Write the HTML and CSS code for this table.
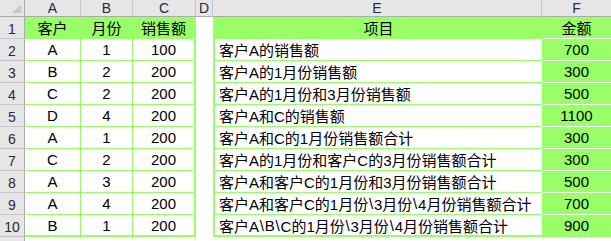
FILE: index.html
```html
<!DOCTYPE html>
<html>
<head>
<meta charset="utf-8">
<link rel="stylesheet" href="styles.css">
</head>
<body>
<div class="sheet">
  <div class="ch corner"><span class="tri"></span></div>
  <div class="ch">A</div><div class="ch">B</div><div class="ch">C</div><div class="ch">D</div><div class="ch">E</div><div class="ch last">F</div>

  <div class="rh">1</div>
  <div class="c fill">客户</div><div class="c fill">月份</div><div class="c fill cr">销售额</div><div class="d"></div>
  <div class="e fill center">项目</div><div class="f">金额</div>

  <div class="rh">2</div>
  <div class="c">A</div><div class="c">1</div><div class="c cr">100</div><div class="d"></div>
  <div class="e">客户A的销售额</div><div class="f">700</div>

  <div class="rh">3</div>
  <div class="c">B</div><div class="c">2</div><div class="c cr">200</div><div class="d"></div>
  <div class="e">客户A的1月份销售额</div><div class="f">300</div>

  <div class="rh">4</div>
  <div class="c">C</div><div class="c">2</div><div class="c cr">200</div><div class="d"></div>
  <div class="e">客户A的1月份和3月份销售额</div><div class="f">500</div>

  <div class="rh">5</div>
  <div class="c">D</div><div class="c">4</div><div class="c cr">200</div><div class="d"></div>
  <div class="e">客户A和C的销售额</div><div class="f">1100</div>

  <div class="rh">6</div>
  <div class="c">A</div><div class="c">1</div><div class="c cr">200</div><div class="d"></div>
  <div class="e">客户A和C的1月份销售额合计</div><div class="f">300</div>

  <div class="rh">7</div>
  <div class="c">C</div><div class="c">2</div><div class="c cr">200</div><div class="d"></div>
  <div class="e">客户A的1月份和客户C的3月份销售额合计</div><div class="f">300</div>

  <div class="rh">8</div>
  <div class="c">A</div><div class="c">3</div><div class="c cr">200</div><div class="d"></div>
  <div class="e">客户A和客户C的1月份和3月份销售额合计</div><div class="f">500</div>

  <div class="rh">9</div>
  <div class="c">A</div><div class="c">4</div><div class="c cr">200</div><div class="d"></div>
  <div class="e">客户A和客户C的1月份<span class="bs">\</span>3月份<span class="bs">\</span>4月份销售额合计</div><div class="f">700</div>

  <div class="rh">10</div>
  <div class="c lastrow">B</div><div class="c lastrow">1</div><div class="c cr lastrow">200</div><div class="d"></div>
  <div class="e lastrow">客户A<span class="bs">\</span>B<span class="bs">\</span>C的1月份<span class="bs">\</span>3月份<span class="bs">\</span>4月份销售额合计</div><div class="f lastrow">900</div>

  <div class="rh"></div>
  <div class="blank"></div><div class="blank"></div><div class="blank"></div><div class="blank"></div><div class="blank"></div><div class="blank"></div>
</div>
</body>
</html>
```

FILE: styles.css
```css
html, body {
  margin: 0;
  padding: 0;
  background: #ffffff;
  overflow: hidden;
}

.sheet {
  display: grid;
  grid-template-columns: 25px 56px 52px 63px 17px 329px 69px;
  grid-template-rows: 17px repeat(11, 22px);
  width: 611px;
  font-family: "Liberation Sans", "Noto Sans CJK SC", sans-serif;
  font-size: 15px;
  color: #000;
}

.sheet > div {
  box-sizing: border-box;
  display: flex;
  align-items: center;
  white-space: nowrap;
  overflow: hidden;
}

.ch {
  background: #e6e6e6;
  border-right: 1px solid #c6c6c6;
  border-bottom: 1px solid #ababab;
  justify-content: center;
  font-size: 14px;
  color: #2a2a3a;
}

.ch.last {
  border-right: none;
}

.corner {
  position: relative;
  border-right: 1px solid #ababab;
}

.tri {
  position: absolute;
  right: 3px;
  bottom: 3px;
  width: 0;
  height: 0;
  border-left: 9px solid transparent;
  border-bottom: 9px solid #c8c8c8;
}

.rh {
  background: #e6e6e6;
  border-right: 1px solid #ababab;
  border-bottom: 1px solid #c6c6c6;
  justify-content: center;
  font-size: 14px;
  color: #2a2a3a;
  padding-top: 2px;
}

.c {
  justify-content: center;
  border-right: 1px solid #99ff66;
  border-bottom: 1px solid #99ff66;
}

.c.cr {
  border-right: 2px solid #99ff66;
}

.lastrow {
  border-bottom: 2px solid #99ff66 !important;
}

.fill {
  background: #99ff66;
}

.d {
  background: #fff;
}

.e {
  border-left: 2px solid #99ff66;
  border-bottom: 1px solid #99ff66;
  padding-left: 4px;
}

.e.center {
  justify-content: center;
  padding-left: 0;
}

.bs {
  padding: 0 0.8px;
}

.f {
  background: #99ff66;
  border-bottom: 1px solid #ffffff;
  justify-content: center;
}

.blank {
  background: #fff;
}
```
